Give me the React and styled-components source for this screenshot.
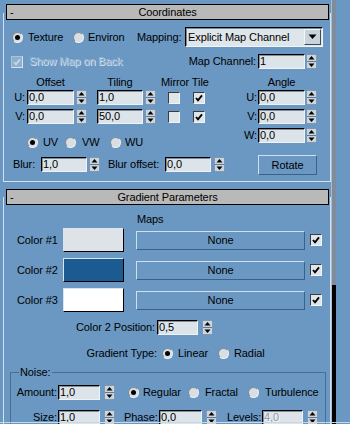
import React from 'react';
import styled, { createGlobalStyle, css } from 'styled-components';

const BLUE = '#6b98c2';

const Global = createGlobalStyle`
  html, body { margin: 0; padding: 0; background: ${BLUE}; }
  body { font-family: "Liberation Sans", Arial, sans-serif; font-size: 11px; color: #000; letter-spacing: -0.1px; }
  * { box-sizing: border-box; }
`;

const place = css`
  margin-left: ${(p) => p.$ml || 0}px;
  flex: none;
`;

const Screen = styled.div`
  position: relative;
  width: 350px;
  height: 424px;
  overflow: hidden;
  display: flex;
  background: ${BLUE};
  &::after {
    content: '';
    position: absolute;
    left: 0;
    right: 0;
    bottom: 1px;
    height: 1px;
    background: #c6d7e5;
  }
`;

const Main = styled.div`
  width: 331px;
  flex: none;
  display: flex;
  flex-direction: column;
  padding-top: 4px;
`;

const ScrollTrack = styled.div`
  width: 5px;
  flex: none;
  border-left: 1px solid #a9bdcd;
  background: linear-gradient(to bottom, #7d8d9b 0, #7d8d9b 285px, #000 285px);
`;

const RollHeader = styled.div`
  position: relative;
  z-index: 1;
  flex: none;
  margin: ${(p) => p.$mt || 0}px 0 0 6px;
  width: 323px;
  height: 16px;
  background: #b9b9b9;
  border: 1px solid #000;
  display: grid;
  grid-template-columns: 24px 1fr 24px;
  align-items: center;
  line-height: 14px;
`;

const Minus = styled.span`
  padding-left: 3px;
`;

const HeaderTitle = styled.span`
  text-align: center;
  white-space: nowrap;
`;

const Frame = styled.div`
  flex: ${(p) => (p.$open ? 1 : 'none')};
  margin: ${(p) => p.$mt}px 0 0 3px;
  width: 328px;
  padding-top: ${(p) => p.$pt}px;
  padding-bottom: ${(p) => p.$pb || 0}px;
  border: 1px solid #d3e1ec;
  border-top: none;
  ${(p) => p.$open && 'border-bottom: none;'}
`;

const Row = styled.div`
  display: flex;
  align-items: center;
  flex: none;
  height: ${(p) => p.$h || 15}px;
  margin-top: ${(p) => p.$mt || 0}px;
  line-height: 13px;
`;

const Split = styled.div`
  display: flex;
  align-items: flex-start;
`;

const Column = styled.div`
  display: flex;
  flex-direction: column;
  width: ${(p) => p.$w}px;
  flex: none;
`;

const justify = { left: 'flex-start', right: 'flex-end', center: 'center' };

const Label = styled.span`
  ${place};
  display: flex;
  justify-content: ${(p) => justify[p.$align || 'left']};
  width: ${(p) => (p.$w ? `${p.$w}px` : 'auto')};
  white-space: nowrap;
  ${(p) =>
    p.$disabled &&
    css`
      color: #93b2cf;
      text-shadow: 1px 1px 0 #d8e5ef;
    `}
`;

const Field = styled.div`
  width: ${(p) => p.$w}px;
  height: 15px;
  flex: none;
  background: #dde4e9;
  border: 1px solid;
  border-color: #000 #eef3f6 #eef3f6 #000;
  box-shadow: inset 1px 1px 0 #7f8f9d;
  padding-left: 1px;
  line-height: 13px;
  white-space: nowrap;
  overflow: hidden;
  color: ${(p) => (p.$disabled ? '#8d9ca8' : '#000')};
  ${(p) => p.$disabled && 'text-shadow: 1px 1px 0 #f4f7f9;'}
`;

const SpinWrap = styled.div`
  ${place};
  display: flex;
  align-items: center;
`;

const ArrowBox = styled.svg`
  display: block;
  flex: none;
  margin-left: ${(p) => p.$ml}px;
`;

function Arrows({ ml }) {
  return (
    <ArrowBox $ml={ml} width="11" height="15" viewBox="0 0 11 15">
      <rect x="0.5" y="0.5" width="10" height="14" fill="#ccd5dc" stroke="#5e7a96" strokeDasharray="1 1" />
      <line x1="1" y1="7.5" x2="10" y2="7.5" stroke="#5e7a96" />
      <path d="M2.5 5.5 L5.5 2 L8.5 5.5 Z" fill="#000" />
      <path d="M2.5 9.5 L5.5 13 L8.5 9.5 Z" fill="#000" />
    </ArrowBox>
  );
}

function Spinner({ ml, w, value, gap = 2, disabled }) {
  return (
    <SpinWrap $ml={ml}>
      <Field $w={w} $disabled={disabled}>{value}</Field>
      <Arrows ml={gap} />
    </SpinWrap>
  );
}

const Select = styled.div`
  ${place};
  width: ${(p) => p.$w}px;
  height: 20px;
  display: flex;
  align-items: center;
  background: #dfe6ea;
  border: 1px solid;
  border-color: #000 #f2f5f7 #f2f5f7 #000;
  box-shadow: inset 1px 1px 0 #7a8a98;
  padding: 0 1px 0 2px;
  line-height: 14px;
`;

const SelectText = styled.span`
  flex: 1;
  white-space: nowrap;
`;

const SelectBtn = styled.div`
  width: 17px;
  height: 16px;
  flex: none;
  background: #c9d3db;
  border: 1px solid;
  border-color: #f4f7f9 #3f4a55 #3f4a55 #f4f7f9;
  display: grid;
  place-items: center;
`;

const Box = styled.span`
  ${place};
  width: 12px;
  height: 12px;
  background: ${(p) => (p.$disabled ? '#8fb0cd' : '#dfe6ea')};
  border: 1px solid;
  border-color: ${(p) => (p.$disabled ? '#a9c3da #d6e3ee #d6e3ee #a9c3da' : '#3c3c3c #f0f4f6 #f0f4f6 #3c3c3c')};
  display: grid;
  place-items: center;
`;

function Check({ ml, on, disabled }) {
  return (
    <Box $ml={ml} $disabled={disabled}>
      {on && (
        <svg width="8" height="8" viewBox="0 0 8 8">
          <path d="M1 4 L3 6.3 L7 1.3" stroke={disabled ? '#c3d5e5' : '#000'} strokeWidth="1.9" fill="none" />
        </svg>
      )}
    </Box>
  );
}

const Radio = styled.span`
  ${place};
  width: 11px;
  height: 11px;
  border-radius: 50%;
  background: #d9dee2;
  border: 1px solid;
  border-color: #7d8a96 #eef2f5 #eef2f5 #7d8a96;
  display: grid;
  place-items: center;
  &::after {
    content: '';
    width: 5px;
    height: 5px;
    border-radius: 50%;
    background: #000;
    display: ${(p) => (p.$on ? 'block' : 'none')};
  }
`;

const FlatButton = styled.div`
  ${place};
  width: ${(p) => p.$w}px;
  height: ${(p) => p.$h}px;
  display: flex;
  align-items: center;
  justify-content: center;
  border: 1px solid;
  border-color: #cfdfec #3d6088 #3d6088 #cfdfec;
  white-space: nowrap;
`;

const Swatch = styled.div`
  ${place};
  width: 61px;
  height: 24px;
  background: ${(p) => p.$c};
  border: 1px solid;
  border-color: #d8e4ee #000 #000 #d8e4ee;
`;

const Group = styled.fieldset`
  margin: ${(p) => p.$mt}px 0 0 6px;
  padding: 0;
  min-width: 0;
  width: 316px;
  border: 1px solid #4a6e93;
  border-bottom: none;
  flex: none;
`;

const Legend = styled.legend`
  margin-left: 8px;
  padding: 0 1px;
  line-height: 13px;
`;

const colors = [
  { name: 'Color #1', c: '#dde3e6' },
  { name: 'Color #2', c: '#1c5b92' },
  { name: 'Color #3', c: '#ffffff' },
];

export default function App() {
  return (
    <>
      <Global />
      <Screen>
        <Main>
          <RollHeader>
            <Minus>-</Minus>
            <HeaderTitle>Coordinates</HeaderTitle>
          </RollHeader>
          <Frame $mt={-7} $pt={7} $pb={6}>
            <Row $h={20} $mt={7}>
              <Radio $ml={8} $on />
              <Label $ml={5} $w={40}>Texture</Label>
              <Radio $ml={5} />
              <Label $ml={4} $w={40}>Environ</Label>
              <Label $ml={9} $w={48}>Mapping:</Label>
              <Select $w={138}>
                <SelectText>Explicit Map Channel</SelectText>
                <SelectBtn>
                  <svg width="9" height="6" viewBox="0 0 9 6">
                    <path d="M0.5 0.5 L8.5 0.5 L4.5 5 Z" fill="#000" />
                  </svg>
                </SelectBtn>
              </Select>
            </Row>
            <Row $mt={7}>
              <Check ml={7} on disabled />
              <Label $ml={6} $w={94} $disabled>Show Map on Back</Label>
              <Label $ml={65} $w={68} $align="right">Map Channel:</Label>
              <Spinner ml={2} w={47} gap={1} value="1" />
            </Row>
            <Split>
              <Column $w={236}>
                <Row $h={11} $mt={8}>
                  <Label $ml={23} $w={47} $align="center">Offset</Label>
                  <Label $ml={23} $w={46} $align="center">Tiling</Label>
                  <Label $ml={18} $w={60}>Mirror Tile</Label>
                </Row>
                {[['U:', '0,0', '1,0'], ['V:', '0,0', '50,0']].map(([l, o, t], i) => (
                  <Row key={l} $mt={i === 0 ? 2 : 4}>
                    <Label $w={21} $align="right">{l}</Label>
                    <Spinner ml={2} w={47} value={o} />
                    <Spinner ml={10} w={46} value={t} />
                    <Check ml={12} />
                    <Check ml={13} on />
                  </Row>
                ))}
                <Row $h={11} $mt={13}>
                  <Radio $ml={23} $on />
                  <Label $ml={5} $w={20}>UV</Label>
                  <Radio $ml={2} />
                  <Label $ml={6} $w={22}>VW</Label>
                  <Radio $ml={6} />
                  <Label $ml={4}>WU</Label>
                </Row>
                <Row $mt={9}>
                  <Label $ml={9} $w={28}>Blur:</Label>
                  <Spinner w={46} value="1,0" />
                  <Label $ml={8} $w={57}>Blur offset:</Label>
                  <Spinner w={46} gap={3} value="0,0" />
                </Row>
              </Column>
              <Column $w={90}>
                <Row $h={11} $mt={8}>
                  <Label $ml={18} $w={47} $align="center">Angle</Label>
                </Row>
                {['U:', 'V:', 'W:'].map((l, i) => (
                  <Row key={l} $mt={i === 0 ? 2 : 4}>
                    <Label $w={17} $align="right">{l}</Label>
                    <Spinner ml={1} w={47} gap={1} value="0,0" />
                  </Row>
                ))}
                <Row $h={20} $mt={12}>
                  <FlatButton $ml={18} $w={59} $h={20}>Rotate</FlatButton>
                </Row>
              </Column>
            </Split>
          </Frame>

          <RollHeader $mt={7}>
            <Minus>-</Minus>
            <HeaderTitle>Gradient Parameters</HeaderTitle>
          </RollHeader>
          <Frame $mt={-8} $pt={8} $open>
            <Row $h={11} $mt={9}>
              <Label $ml={133}>Maps</Label>
            </Row>
            {colors.map((c, i) => (
              <Row key={c.name} $h={24} $mt={i === 0 ? 3 : 6}>
                <Label $ml={13} $w={46}>{c.name}</Label>
                <Swatch $c={c.c} />
                <FlatButton $ml={12} $w={169} $h={19}>None</FlatButton>
                <Check ml={5} on />
              </Row>
            ))}
            <Row $mt={8}>
              <Label $ml={76} $w={75} $align="right">Color 2 Position:</Label>
              <Spinner ml={2} w={41} gap={4} value="0,5" />
            </Row>
            <Row $h={11} $mt={13}>
              <Label $ml={81} $w={72} $align="right">Gradient Type:</Label>
              <Radio $ml={5} $on />
              <Label $ml={5} $w={36}>Linear</Label>
              <Radio $ml={4} />
              <Label $ml={5}>Radial</Label>
            </Row>
            <Group $mt={7}>
              <Legend>Noise:</Legend>
              <Row $mt={6}>
                <Label $w={46} $align="right">Amount:</Label>
                <Spinner ml={1} w={42} gap={4} value="1,0" />
                <Radio $ml={13} $on />
                <Label $ml={4} $w={42}>Regular</Label>
                <Radio $ml={3} />
                <Label $ml={6} $w={38}>Fractal</Label>
                <Radio $ml={5} />
                <Label $ml={6}>Turbulence</Label>
              </Row>
              <Row $mt={10}>
                <Label $w={46} $align="right">Size:</Label>
                <Spinner ml={1} w={42} gap={4} value="1,0" />
                <Label $ml={9} $w={34}>Phase:</Label>
                <Spinner ml={1} w={43} gap={4} value="0,0" />
                <Label $ml={10} $w={34}>Levels:</Label>
                <Spinner ml={1} w={41} gap={4} value="4,0" disabled />
              </Row>
            </Group>
          </Frame>
        </Main>
        <ScrollTrack />
      </Screen>
    </>
  );
}
